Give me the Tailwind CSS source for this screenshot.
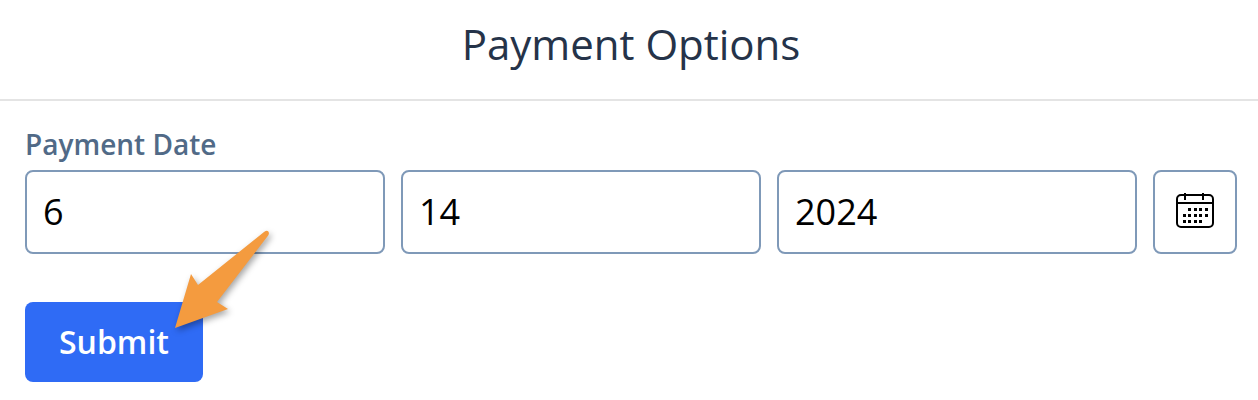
<!DOCTYPE html>
<html lang="en">

<head>
    <meta charset="UTF-8">
    <meta name="viewport" content="width=device-width, initial-scale=1.0">
    <title>Payment Options</title>
    <script src="https://cdn.jsdelivr.net/npm/@tailwindcss/browser@4"></script>
</head>

<body class="bg-white font-['Open_Sans',sans-serif] h-[400px] overflow-hidden relative">
    <header class="h-[101px] border-b-2 border-[#e4e4e4] flex items-center justify-center pb-3 pl-1">
        <h1 class="text-[42px] leading-[76px] text-[#253349] font-normal">Payment Options</h1>
    </header>

    <form class="pl-[25px] pr-[21px] pt-[25px]">
        <label class="block text-[28px] leading-[36px] font-semibold text-[#516a87] mb-[8px]">Payment Date</label>
        <div class="flex gap-4">
            <input type="text" value="6" class="w-[360px] h-[84px] px-4 pb-[2px] text-[36px] text-black border-2 border-[#7f99b8] rounded-lg">
            <input type="text" value="14" class="w-[360px] h-[84px] px-4 pb-[2px] text-[36px] text-black border-2 border-[#7f99b8] rounded-lg">
            <input type="text" value="2024" class="w-[360px] h-[84px] px-4 pb-[2px] text-[36px] text-black border-2 border-[#7f99b8] rounded-lg">
            <button type="button" class="w-[84px] h-[84px] flex items-center justify-center border-2 border-[#7f99b8] rounded-lg">
                <svg class="mb-[3px]" width="38" height="35" viewBox="0 0 38 35" fill="none">
                    <rect x="1" y="2" width="36" height="32" rx="4" stroke="black" stroke-width="2" />
                    <path d="M1 10H37M9 0V7M27 0V7" stroke="black" stroke-width="2" />
                    <g fill="black">
                        <rect x="12" y="15" width="3" height="3" /><rect x="18" y="15" width="3" height="3" /><rect x="23" y="15" width="3" height="3" /><rect x="29" y="15" width="3" height="3" />
                        <rect x="7" y="21" width="3" height="3" /><rect x="12" y="21" width="3" height="3" /><rect x="18" y="21" width="3" height="3" /><rect x="23" y="21" width="3" height="3" /><rect x="29" y="21" width="3" height="3" />
                        <rect x="7" y="27" width="3" height="3" /><rect x="12" y="27" width="3" height="3" /><rect x="18" y="27" width="3" height="3" /><rect x="23" y="27" width="3" height="3" />
                    </g>
                </svg>
            </button>
        </div>
        <button type="button" class="mt-[48px] w-[178px] h-[80px] bg-[#2f6bf5] text-white text-[32px] font-semibold rounded-lg">Submit</button>
    </form>

    <!-- Arrow annotation -->
    <svg class="absolute left-0 top-0 pointer-events-none" width="1258" height="400" viewBox="0 0 1258 400" fill="none">
        <path d="M175 328L191 274L198 285L264 232Q268 229 269 233Q269 235 267 237L217 302L228 309Z" fill="#f49b3f" class="drop-shadow-[2px_3px_3px_rgba(0,0,0,0.35)]" />
    </svg>
</body>

</html>
